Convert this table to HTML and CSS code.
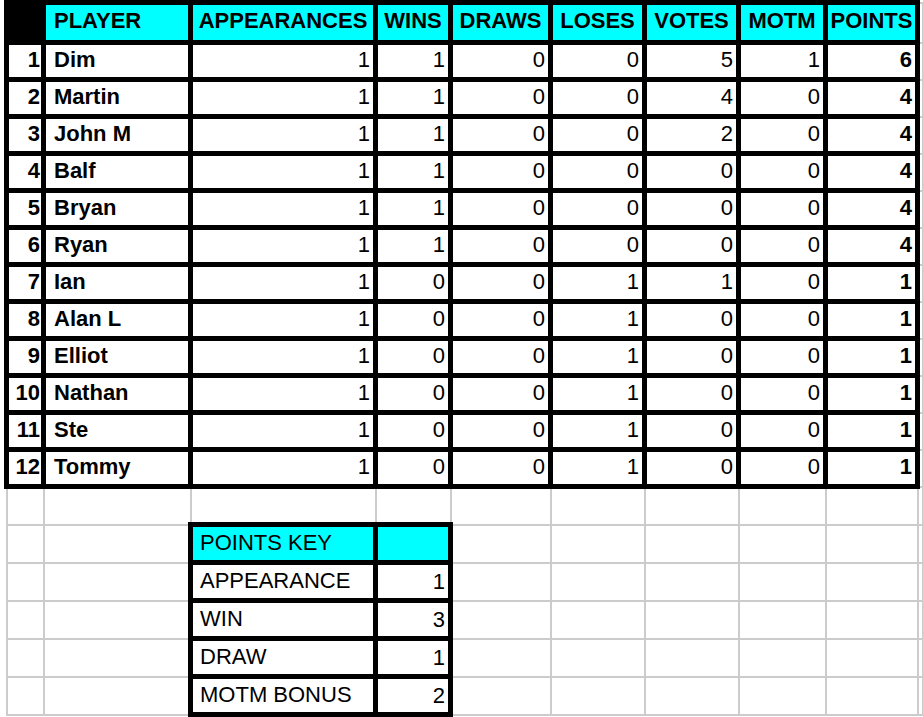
FILE: index.html
```html
<!DOCTYPE html>
<html lang="en">
<head>
<meta charset="utf-8">
<title>Player Points</title>
<link rel="stylesheet" href="styles.css">
</head>
<body>
<table class="sheet">
  <colgroup>
    <col class="c-rn"><col class="c-name"><col class="c-app"><col class="c-wins"><col class="c-draws"><col class="c-loses"><col class="c-votes"><col class="c-motm"><col class="c-pts"><col class="c-extra">
  </colgroup>
  <tr class="r-head">
    <td class="box corner"></td>
    <td class="box hd left">PLAYER</td>
    <td class="box hd">APPEARANCES</td>
    <td class="box hd">WINS</td>
    <td class="box hd">DRAWS</td>
    <td class="box hd">LOSES</td>
    <td class="box hd">VOTES</td>
    <td class="box hd">MOTM</td>
    <td class="box hd">POINTS</td>
    <td></td>
  </tr>
  <tr class="r-data"><td class="box rn">1</td><td class="box name">Dim</td><td class="box num">1</td><td class="box num">1</td><td class="box num">0</td><td class="box num">0</td><td class="box num">5</td><td class="box num">1</td><td class="box num pts">6</td><td></td></tr>
  <tr class="r-data"><td class="box rn">2</td><td class="box name">Martin</td><td class="box num">1</td><td class="box num">1</td><td class="box num">0</td><td class="box num">0</td><td class="box num">4</td><td class="box num">0</td><td class="box num pts">4</td><td></td></tr>
  <tr class="r-data"><td class="box rn">3</td><td class="box name">John M</td><td class="box num">1</td><td class="box num">1</td><td class="box num">0</td><td class="box num">0</td><td class="box num">2</td><td class="box num">0</td><td class="box num pts">4</td><td></td></tr>
  <tr class="r-data"><td class="box rn">4</td><td class="box name">Balf</td><td class="box num">1</td><td class="box num">1</td><td class="box num">0</td><td class="box num">0</td><td class="box num">0</td><td class="box num">0</td><td class="box num pts">4</td><td></td></tr>
  <tr class="r-data"><td class="box rn">5</td><td class="box name">Bryan</td><td class="box num">1</td><td class="box num">1</td><td class="box num">0</td><td class="box num">0</td><td class="box num">0</td><td class="box num">0</td><td class="box num pts">4</td><td></td></tr>
  <tr class="r-data"><td class="box rn">6</td><td class="box name">Ryan</td><td class="box num">1</td><td class="box num">1</td><td class="box num">0</td><td class="box num">0</td><td class="box num">0</td><td class="box num">0</td><td class="box num pts">4</td><td></td></tr>
  <tr class="r-data"><td class="box rn">7</td><td class="box name">Ian</td><td class="box num">1</td><td class="box num">0</td><td class="box num">0</td><td class="box num">1</td><td class="box num">1</td><td class="box num">0</td><td class="box num pts">1</td><td></td></tr>
  <tr class="r-data"><td class="box rn">8</td><td class="box name">Alan L</td><td class="box num">1</td><td class="box num">0</td><td class="box num">0</td><td class="box num">1</td><td class="box num">0</td><td class="box num">0</td><td class="box num pts">1</td><td></td></tr>
  <tr class="r-data"><td class="box rn">9</td><td class="box name">Elliot</td><td class="box num">1</td><td class="box num">0</td><td class="box num">0</td><td class="box num">1</td><td class="box num">0</td><td class="box num">0</td><td class="box num pts">1</td><td></td></tr>
  <tr class="r-data"><td class="box rn">10</td><td class="box name">Nathan</td><td class="box num">1</td><td class="box num">0</td><td class="box num">0</td><td class="box num">1</td><td class="box num">0</td><td class="box num">0</td><td class="box num pts">1</td><td></td></tr>
  <tr class="r-data"><td class="box rn">11</td><td class="box name">Ste</td><td class="box num">1</td><td class="box num">0</td><td class="box num">0</td><td class="box num">1</td><td class="box num">0</td><td class="box num">0</td><td class="box num pts">1</td><td></td></tr>
  <tr class="r-data"><td class="box rn">12</td><td class="box name">Tommy</td><td class="box num">1</td><td class="box num">0</td><td class="box num">0</td><td class="box num">1</td><td class="box num">0</td><td class="box num">0</td><td class="box num pts">1</td><td></td></tr>
  <tr class="r-blank"><td></td><td></td><td></td><td></td><td></td><td></td><td></td><td></td><td></td><td></td></tr>
  <tr class="r-blank"><td></td><td></td><td class="box hd key-label">POINTS KEY</td><td class="box hd"></td><td></td><td></td><td></td><td></td><td></td><td></td></tr>
  <tr class="r-blank"><td></td><td></td><td class="box key-label">APPEARANCE</td><td class="box num">1</td><td></td><td></td><td></td><td></td><td></td><td></td></tr>
  <tr class="r-blank"><td></td><td></td><td class="box key-label">WIN</td><td class="box num">3</td><td></td><td></td><td></td><td></td><td></td><td></td></tr>
  <tr class="r-blank"><td></td><td></td><td class="box key-label">DRAW</td><td class="box num">1</td><td></td><td></td><td></td><td></td><td></td><td></td></tr>
  <tr class="r-blank"><td></td><td></td><td class="box key-label">MOTM BONUS</td><td class="box num">2</td><td></td><td></td><td></td><td></td><td></td><td></td></tr>
</table>
</body>
</html>
```

FILE: styles.css
```css
html, body {
  margin: 0;
  padding: 0;
  background: #ffffff;
  overflow: hidden;
}

.sheet {
  border-collapse: collapse;
  table-layout: fixed;
  width: 916px;
  margin-left: 4px;
  font-family: "Liberation Sans", Arial, sans-serif;
  font-size: 22px;
  color: #000000;
}

.c-rn { width: 37px; }
.c-name { width: 147px; }
.c-app { width: 185px; }
.c-wins { width: 75px; }
.c-draws { width: 100px; }
.c-loses { width: 94px; }
.c-votes { width: 94px; }
.c-motm { width: 87px; }
.c-pts { width: 92px; }
.c-extra { width: 5px; }

.sheet td {
  border: 2px solid #cccccc;
  padding: 0 3px;
  white-space: nowrap;
  overflow: hidden;
  line-height: 24px;
  vertical-align: middle;
}

.r-head { height: 40px; }
.r-data { height: 37px; }
.r-blank { height: 38px; }

.r-data td {
  padding-bottom: 2px;
}

.sheet td.box {
  border: 5px solid #000000;
}

.sheet td.corner {
  background: #000000;
}

.sheet td.hd {
  background: #00ffff;
  font-weight: bold;
  text-align: center;
  padding: 0 0 4px 0;
}

.sheet td.left {
  text-align: left;
  padding-left: 8px;
}

.sheet td.num {
  text-align: right;
  padding-right: 3px;
}

.sheet td.pts {
  font-weight: bold;
}

.sheet td.rn {
  text-align: right;
  font-weight: bold;
  padding-right: 1px;
  padding-left: 0;
}

.sheet td.name {
  font-weight: bold;
  padding-left: 8px;
}

.sheet td.key-label {
  text-align: left;
  font-weight: normal;
  padding-left: 7px;
  padding-bottom: 2px;
}
```
